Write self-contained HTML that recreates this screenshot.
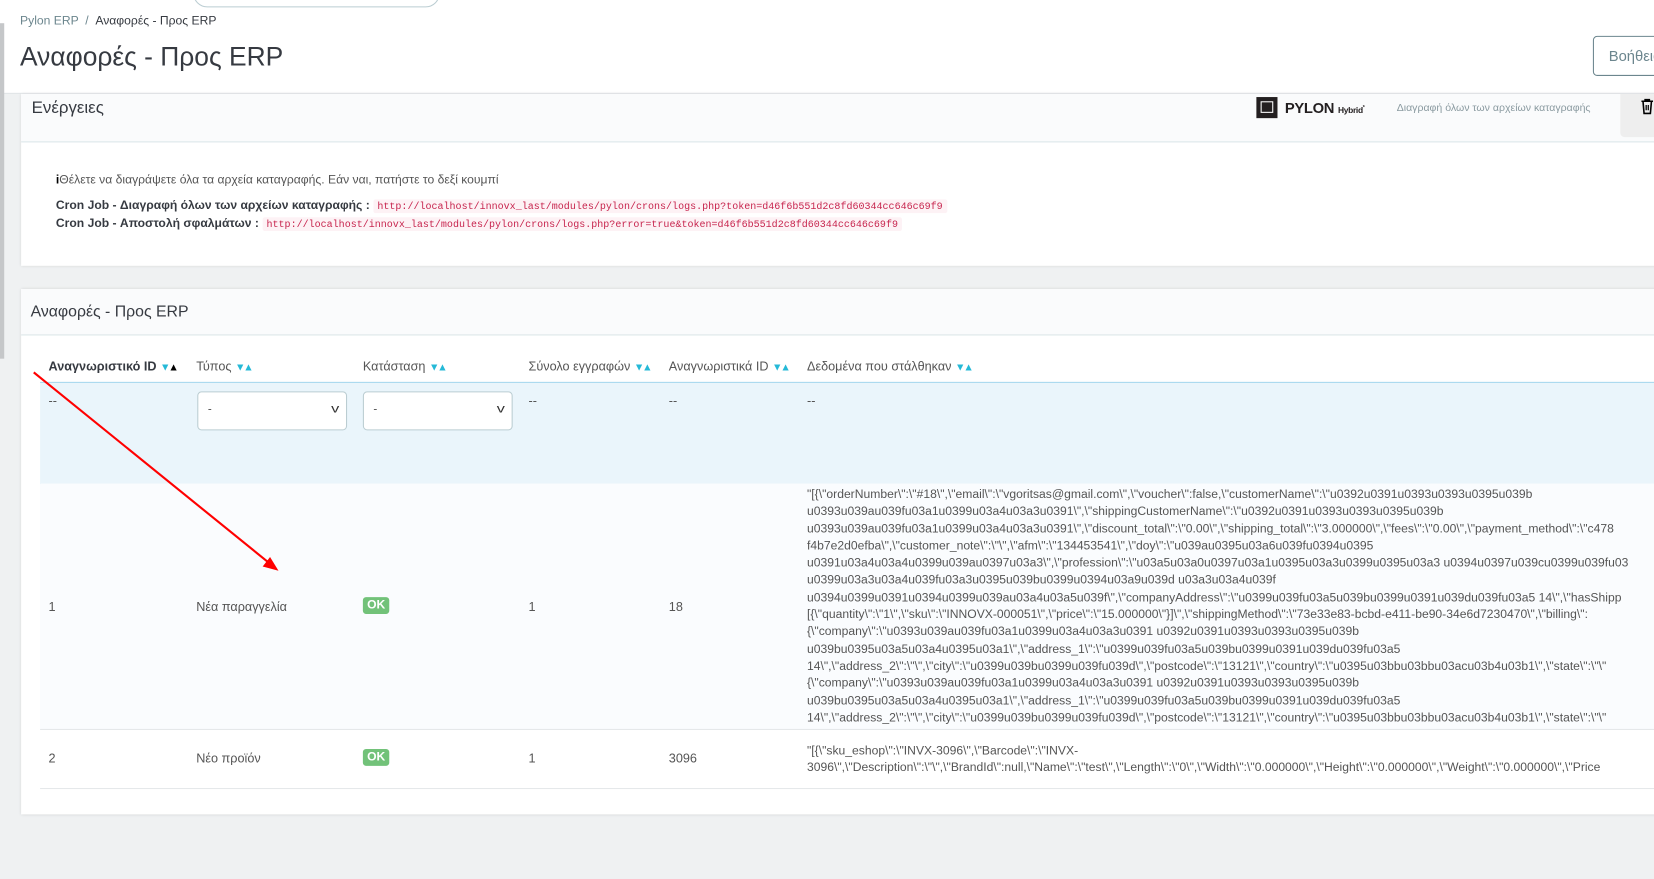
<!DOCTYPE html>
<html><head><meta charset="utf-8"><style>
html,body{margin:0;padding:0;width:1654px;height:879px;overflow:hidden;background:#eff1f2}
#w{position:absolute;left:0;top:0;width:1568px;height:833px;transform:scale(1.0549);transform-origin:0 0;font-family:"Liberation Sans","DejaVu Sans",sans-serif;color:#363a41;background:#eff1f2;overflow:hidden}
.a{position:absolute;white-space:nowrap}
.code{font-family:"Liberation Mono",monospace;font-size:9.5px;color:#c7254e;background:#fdf2f5;padding:1px 4px;border-radius:2px;font-weight:normal}
.th{font-size:12px;color:#555}
.ar{color:#25b9d7;font-size:10px;letter-spacing:-2px}
.sel{position:absolute;width:140px;height:35px;border:1px solid #bbcdd2;border-radius:4px;background:#fff;top:371px}
.sel span{position:absolute;left:9px;top:10px;font-size:11px;color:#555}
.sel i{position:absolute;right:8px;top:10px;font-style:normal;font-size:11px;color:#333;transform:scaleX(1.4)}
.ok{position:absolute;background:#72c279;color:#fff;font-size:11.5px;border-radius:3px;padding:2px 4px;font-weight:bold}
.c{font-size:12px;color:#555}
.data{position:absolute;left:765px;font-size:11.5px;line-height:16.3px;color:#555;white-space:nowrap}
</style></head><body><div id="w">
<div class="a" style="left:0;top:0;width:1568px;height:88px;background:#fff;border-bottom:1px solid #dfe3e6"></div>
<div class="a" style="left:183px;top:-20px;width:232px;height:25px;border:1px solid #bbcdd2;border-radius:14px;background:#fff"></div>
<div class="a" style="left:0;top:22px;width:4px;height:318px;background:#c5c7c9"></div>
<div class="a" style="left:19px;top:14px;font-size:11.5px;color:#6c868e">Pylon ERP &nbsp;/&nbsp; <span style="color:#363a41">Αναφορές - Προς ERP</span></div>
<div class="a" style="left:19px;top:40px;font-size:25px;color:#363a41">Αναφορές - Προς ERP</div>
<div class="a" style="left:1510px;top:34px;width:80px;height:36px;border:1px solid #6c868e;border-radius:4px;background:#fff"></div>
<div class="a" style="left:1525px;top:45px;font-size:14px;color:#6c868e">Βοήθεια</div>

<!-- panel 1 -->
<div class="a" style="left:20px;top:89px;width:1560px;height:163px;background:#fff;box-shadow:0 0 3px rgba(0,0,0,.12)"></div>
<div class="a" style="left:20px;top:89px;width:1560px;height:45px;background:#fafbfc;border-bottom:1px solid #dbe6e9"></div>
<div class="a" style="left:30px;top:94px;font-size:16px;color:#363a41">Ενέργειες</div>
<div class="a" style="left:1191px;top:92px;width:20px;height:20px;background:#231f20"></div>
<div class="a" style="left:1195px;top:96px;width:10px;height:9px;border:1.5px solid #fff"></div>
<div class="a" style="left:1218px;top:94px;font-size:14px;font-weight:bold;color:#231f20;letter-spacing:-0.3px">PYLON <span style="font-size:8px">Hybrid<sup style="font-size:5px">*</sup></span></div>
<div class="a" style="left:1324px;top:97px;font-size:10px;color:#8a9aa0">Διαγραφή όλων των αρχείων καταγραφής</div>
<div class="a" style="left:1536px;top:89px;width:40px;height:41px;background:#eeeeee;border-radius:0 0 0 4px"></div>
<svg class="a" style="left:1555px;top:93px" width="13" height="16" viewBox="0 0 13 16"><path d="M1 3h11M4.5 3V1.5h4V3M2.5 3l1 11.5h6l1-11.5" fill="none" stroke="#000" stroke-width="1.5"/><path d="M5.5 6.5v5M7.5 6.5v5" stroke="#000" stroke-width="1.2"/></svg>
<div class="a" style="left:53px;top:165px;font-size:11.5px;color:#555"><b style="color:#000">i</b>Θέλετε να διαγράψετε όλα τα αρχεία καταγραφής. Εάν ναι, πατήστε το δεξί κουμπί</div>
<div class="a" style="left:53px;top:189px;font-size:11.5px;font-weight:bold;color:#363a41">Cron Job - Διαγραφή όλων των αρχείων καταγραφής : <span class="code">http://localhost/innovx_last/modules/pylon/crons/logs.php?token=d46f6b551d2c8fd60344cc646c69f9</span></div>
<div class="a" style="left:53px;top:206px;font-size:11.5px;font-weight:bold;color:#363a41">Cron Job - Αποστολή σφαλμάτων : <span class="code">http://localhost/innovx_last/modules/pylon/crons/logs.php?error=true&amp;token=d46f6b551d2c8fd60344cc646c69f9</span></div>

<!-- panel 2 -->
<div class="a" style="left:20px;top:274px;width:1560px;height:498px;background:#fff;box-shadow:0 0 3px rgba(0,0,0,.12)"></div>
<div class="a" style="left:20px;top:274px;width:1560px;height:43px;background:#fafbfc;border-bottom:1px solid #dbe6e9"></div>
<div class="a" style="left:29px;top:287px;font-size:15px;color:#363a41">Αναφορές - Προς ERP</div>

<div class="a th" style="left:46px;top:340px;font-weight:bold;color:#363a41">Αναγνωριστικό ID <span class="ar">▼</span><span style="font-size:10px;color:#000">▲</span></div>
<div class="a th" style="left:186px;top:340px">Τύπος <span class="ar">▼▲</span></div>
<div class="a th" style="left:344px;top:340px">Κατάσταση <span class="ar">▼▲</span></div>
<div class="a th" style="left:501px;top:340px">Σύνολο εγγραφών <span class="ar">▼▲</span></div>
<div class="a th" style="left:634px;top:340px">Αναγνωριστικά ID <span class="ar">▼▲</span></div>
<div class="a th" style="left:765px;top:340px">Δεδομένα που στάλθηκαν <span class="ar">▼▲</span></div>

<div class="a" style="left:38px;top:362px;width:1540px;height:95px;background:#eaf5fb;border-top:1px solid #a8d8ee;border-bottom:1px solid #a8d8ee"></div>
<div class="a c" style="left:46px;top:373px">--</div>
<div class="sel" style="left:187px"><span>-</span><i>v</i></div>
<div class="sel" style="left:344px"><span>-</span><i>v</i></div>
<div class="a c" style="left:501px;top:373px">--</div>
<div class="a c" style="left:634px;top:373px">--</div>
<div class="a c" style="left:765px;top:373px">--</div>

<div class="a" style="left:38px;top:458px;width:1540px;height:233px;background:#fafcfe;border-bottom:1px solid #e5e8ea"></div>
<div class="a c" style="left:46px;top:568px">1</div>
<div class="a c" style="left:186px;top:568px">Νέα παραγγελία</div>
<div class="ok" style="left:344px;top:566px">OK</div>
<div class="a c" style="left:501px;top:568px">1</div>
<div class="a c" style="left:634px;top:568px">18</div>
<div class="data" style="top:461px">"[{\"orderNumber\":\"#18\",\"email\":\"vgoritsas@gmail.com\",\"voucher\":false,\"customerName\":\"u0392u0391u0393u0393u0395u039b<br>u0393u039au039fu03a1u0399u03a4u03a3u0391\",\"shippingCustomerName\":\"u0392u0391u0393u0393u0395u039b<br>u0393u039au039fu03a1u0399u03a4u03a3u0391\",\"discount_total\":\"0.00\",\"shipping_total\":\"3.000000\",\"fees\":\"0.00\",\"payment_method\":\"c478<br>f4b7e2d0efba\",\"customer_note\":\"\",\"afm\":\"134453541\",\"doy\":\"u039au0395u03a6u039fu0394u0395<br>u0391u03a4u03a4u0399u039au0397u03a3\",\"profession\":\"u03a5u03a0u0397u03a1u0395u03a3u0399u0395u03a3 u0394u0397u039cu0399u039fu03<br>u0399u03a3u03a4u039fu03a3u0395u039bu0399u0394u03a9u039d u03a3u03a4u039f<br>u0394u0399u0391u0394u0399u039au03a4u03a5u039f\",\"companyAddress\":\"u0399u039fu03a5u039bu0399u0391u039du039fu03a5 14\",\"hasShipp<br>[{\"quantity\":\"1\",\"sku\":\"INNOVX-000051\",\"price\":\"15.000000\"}]\",\"shippingMethod\":\"73e33e83-bcbd-e411-be90-34e6d7230470\",\"billing\":<br>{\"company\":\"u0393u039au039fu03a1u0399u03a4u03a3u0391 u0392u0391u0393u0393u0395u039b<br>u039bu0395u03a5u03a4u0395u03a1\",\"address_1\":\"u0399u039fu03a5u039bu0399u0391u039du039fu03a5<br>14\",\"address_2\":\"\",\"city\":\"u0399u039bu0399u039fu039d\",\"postcode\":\"13121\",\"country\":\"u0395u03bbu03bbu03acu03b4u03b1\",\"state\":\"\"<br>{\"company\":\"u0393u039au039fu03a1u0399u03a4u03a3u0391 u0392u0391u0393u0393u0395u039b<br>u039bu0395u03a5u03a4u0395u03a1\",\"address_1\":\"u0399u039fu03a5u039bu0399u0391u039du039fu03a5<br>14\",\"address_2\":\"\",\"city\":\"u0399u039bu0399u039fu039d\",\"postcode\":\"13121\",\"country\":\"u0395u03bbu03bbu03acu03b4u03b1\",\"state\":\"\"</div>

<div class="a" style="left:38px;top:692px;width:1540px;height:55px;background:#fff;border-bottom:1px solid #e5e8ea"></div>
<div class="a c" style="left:46px;top:712px">2</div>
<div class="a c" style="left:186px;top:712px">Νέο προϊόν</div>
<div class="ok" style="left:344px;top:710px">OK</div>
<div class="a c" style="left:501px;top:712px">1</div>
<div class="a c" style="left:634px;top:712px">3096</div>
<div class="data" style="top:704px">"[{\"sku_eshop\":\"INVX-3096\",\"Barcode\":\"INVX-<br>3096\",\"Description\":\"\",\"BrandId\":null,\"Name\":\"test\",\"Length\":\"0\",\"Width\":\"0.000000\",\"Height\":\"0.000000\",\"Weight\":\"0.000000\",\"Price</div>

<svg class="a" style="left:0;top:0" width="1568" height="833"><line x1="32" y1="353" x2="258" y2="536" stroke="#f00" stroke-width="2"/><path d="M264 541 L249 537 L256 528 Z" fill="#f00"/></svg>
</div></body></html>
